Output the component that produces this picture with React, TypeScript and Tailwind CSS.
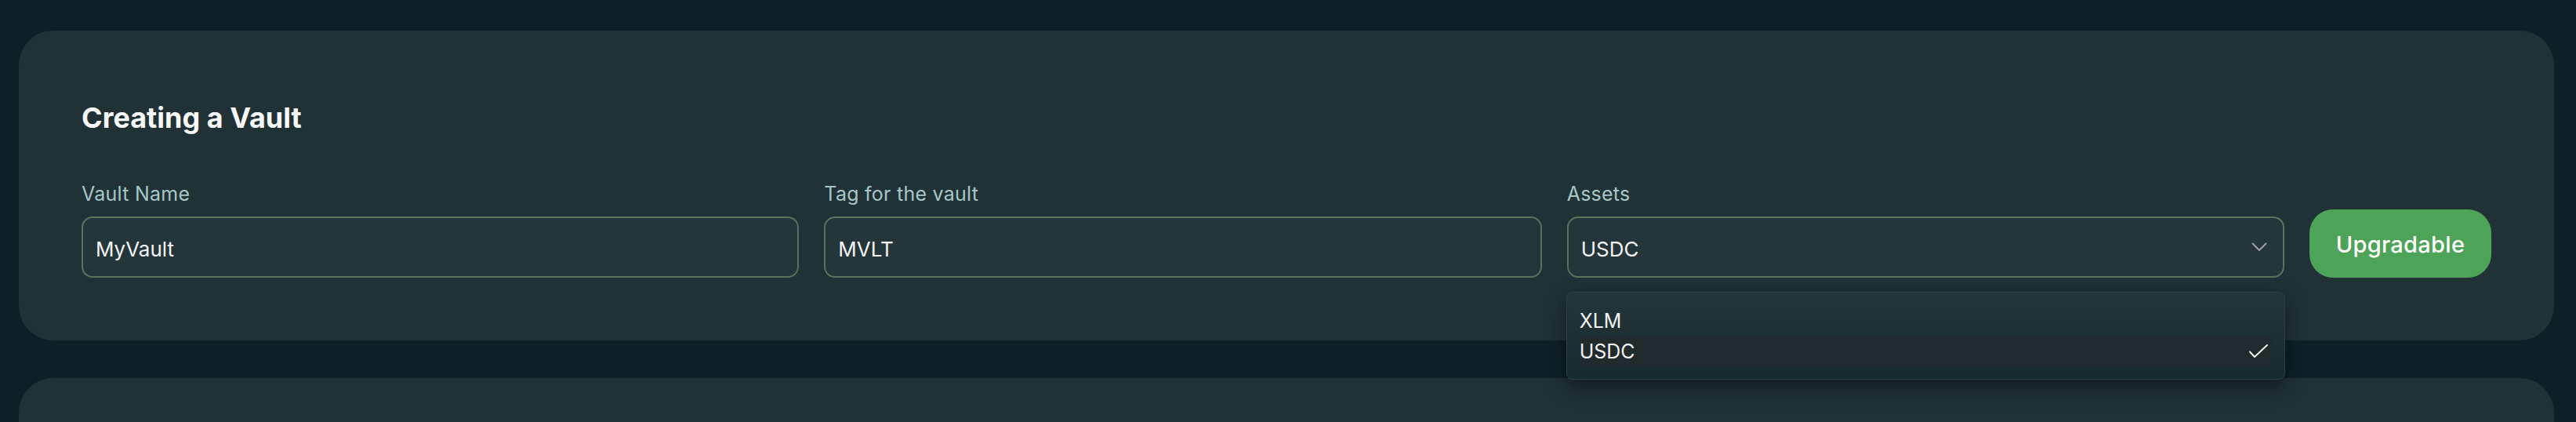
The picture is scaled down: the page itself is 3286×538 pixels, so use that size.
import { useState } from "react";

const assets = ["XLM", "USDC"];

function Field({ label, value }: { label: string; value: string }) {
  return (
    <div className="flex min-w-0 flex-1 flex-col">
      <label className="pt-[2px] text-[25px] leading-8 tracking-[0.01em] text-[#a6c6c6]">{label}</label>
      <input
        readOnly
        value={value}
        className="mt-[13px] h-[78px] w-full rounded-[14px] border-2 border-[#58725c] bg-[#24363a] px-4 pt-[4px] text-[26px] text-[#f4f4f4] outline-none"
      />
    </div>
  );
}

function AssetSelect() {
  const [selected] = useState("USDC");
  return (
    <div className="flex min-w-0 flex-1 flex-col">
      <label className="pt-[2px] text-[25px] leading-8 tracking-[0.01em] text-[#a6c6c6]">Assets</label>
      <div className="relative mt-[13px]">
        <button className="flex h-[78px] w-full items-center justify-between rounded-[14px] border-2 border-[#58725c] bg-[#24363a] pl-4 pr-[20px] pt-[4px] text-[26px] text-[#f4f4f4]">
          <span>{selected}</span>
          <svg width="20" height="12" viewBox="0 0 20 12" fill="none" className="-mt-[4px]">
            <polyline points="1.5,1.5 10,10 18.5,1.5" stroke="#a19daa" strokeWidth="2" strokeLinecap="round" strokeLinejoin="round" />
          </svg>
        </button>
        <div className="absolute left-[-1px] right-[-1px] top-[calc(100%+18px)] z-10 rounded-lg border border-[#2e3e42] bg-linear-to-b from-[#25363a] to-[#172a2e] p-4 shadow-[0_10px_24px_rgba(0,0,0,0.45)]">
          {assets.map((a) => (
            <div
              key={a}
              className={`flex h-[39px] items-center justify-between rounded-sm pt-[3px] text-[25px] text-[#f1f1f1] ${
                a === selected ? "bg-[#212a2d]" : ""
              }`}
            >
              <span>{a}</span>
              {a === selected && (
                <svg width="26" height="20" viewBox="0 0 26 20" fill="none" className="-mt-[3px] mr-[4px]">
                  <polyline points="2,10.5 8,17 24,2" stroke="#f1f1f1" strokeWidth="2" strokeLinecap="round" strokeLinejoin="round" />
                </svg>
              )}
            </div>
          ))}
        </div>
      </div>
    </div>
  );
}

export default function App() {
  return (
    <div className="flex min-h-screen flex-col gap-12 overflow-hidden bg-[#0d2027] pl-6 pr-7 pt-[39px] font-['Inter',sans-serif]">
      <section className="rounded-[44px] bg-[#203236] px-20 pb-20 pt-[91px]">
        <h2 className="text-[36px] font-bold leading-10 text-[#f7f7f7]">Creating a Vault</h2>
        <div className="mt-[59px] flex items-end gap-8">
          <Field label="Vault Name" value="MyVault" />
          <Field label="Tag for the vault" value="MVLT" />
          <AssetSelect />
          <button className="h-[87px] w-[232px] shrink-0 rounded-[30px] bg-[#4da357] pt-[3px] text-[29px] font-medium tracking-[0.01em] text-white">
            Upgradable
          </button>
        </div>
      </section>
      <section className="h-[400px] shrink-0 rounded-[44px] bg-[#203236]" />
    </div>
  );
}
